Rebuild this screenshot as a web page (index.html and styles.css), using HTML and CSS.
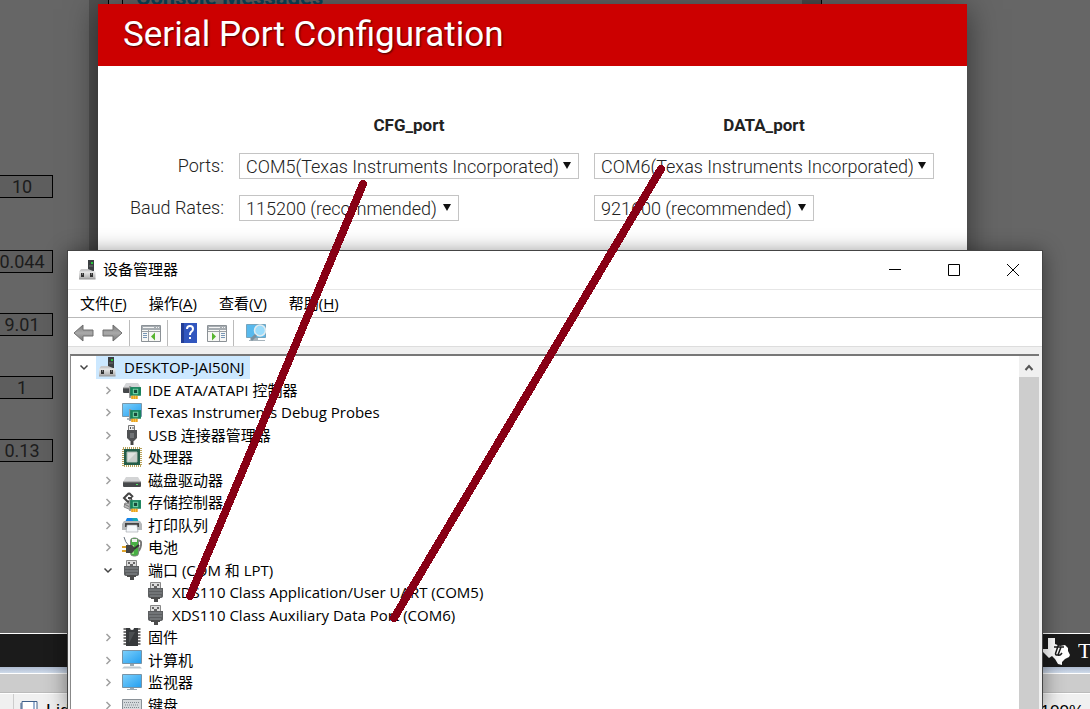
FILE: index.html
```html
<!DOCTYPE html>
<html lang="zh-CN">
<head>
    <meta charset="UTF-8">
    <meta name="viewport" content="width=device-width, initial-scale=1.0">
    <title>Serial Port Configuration</title>
    <link rel="stylesheet" href="styles.css">
</head>
<body>

    <!-- icon sprites -->
    <svg width="0" height="0" class="sprites" aria-hidden="true">
        <defs>
            <linearGradient id="gray" x1="0" y1="0" x2="0" y2="1"><stop offset="0" stop-color="#eee"/><stop offset="1" stop-color="#aaa"/></linearGradient>
            <linearGradient id="blue" x1="0" y1="0" x2="1" y2="1"><stop offset="0" stop-color="#7dd0fb"/><stop offset="1" stop-color="#229ef0"/></linearGradient>
            <linearGradient id="arrow" x1="0" y1="0" x2="0" y2="1"><stop offset="0" stop-color="#777"/><stop offset=".5" stop-color="#aaa"/><stop offset="1" stop-color="#777"/></linearGradient>
        </defs>
        <symbol id="i-pc" viewBox="0 0 20 20">
            <path d="M10 0h6v11h-6z" fill="#3b3f42"/><path d="M13 2h2v2h-2z" fill="#26c53a"/><path d="M11 6h4" stroke="#777"/>
            <path d="M3 9h7l5 2 2 1v2H1v-2z" fill="#c9c9ca"/><path d="M1 11.500h16.500V19H1z" fill="url(#gray)"/><path d="M1 19h16.500" stroke="#999"/>
            <path d="M3 13h3v4H3zM12 13h3v4h-3z" fill="#333"/><path d="M4 13h1v2H4zM13 13h1v2h-1z" fill="#777"/>
        </symbol>
        <symbol id="i-card" viewBox="0 0 11 12">
            <path d="M1 0v11" stroke="#999" stroke-width="2"/><path d="M1 1h10v8H1z" fill="#17825a"/><path d="M4 3h4v4H4z" fill="#174b3c" stroke="#72d1a5"/><path d="M2 9h6v3H2z" fill="#eba11b"/><path d="M4 9v3M6 9v3" stroke="#fbd66c" stroke-width=".6"/>
        </symbol>
        <symbol id="i-ide" viewBox="0 0 20 20">
            <path d="M4 3h12l3 5H1z" fill="#d4d5d7"/><path d="M1 8h18v4q0 1-1 1H2q-1 0-1-1z" fill="#45484a"/><path d="M1 8h18" stroke="#888"/>
            <use href="#i-card" x="7" y="6" width="12" height="13"/>
        </symbol>
        <symbol id="i-probe" viewBox="0 0 20 20">
            <path d="M.5 1.500h19v13H.5z" fill="url(#blue)" stroke="#7b98aa"/><path d="M5 17h7" stroke="#a8b5bd" stroke-width="2"/>
            <use href="#i-card" x="7" y="7" width="12" height="13"/>
        </symbol>
        <symbol id="i-usb" viewBox="0 0 20 20">
            <path d="M6.500 .5h6v6h-6z" fill="#eee" stroke="#777"/><path d="M8.500 2v2M11 2v2" stroke="#555"/><path d="M5 5h10v8l-3 3H8l-3-3z" fill="#505254"/><path d="M8 8h4v5H8z" fill="#717476"/><path d="M8.500 16h3v4h-3z" fill="#444"/>
        </symbol>
        <symbol id="i-cpu" viewBox="0 0 20 20">
            <path d="M1 1h18v18H1z" fill="none" stroke="#b8a25a" stroke-width="2" stroke-dasharray="1 1"/><path d="M2 2h16v16H2z" fill="#235d49"/><path d="M5 5h10v10H5z" fill="#dfe2df" stroke="#a7b8ae"/><path d="M6 14l8-8v8z" fill="#c8cdca"/>
        </symbol>
        <symbol id="i-disk" viewBox="0 0 20 20">
            <path d="M4 7h12l3 5H1z" fill="#d3d4d5"/><path d="M1 12h18v4q0 1-1 1H2q-1 0-1-1z" fill="#47494b"/><path d="M1 12h18" stroke="#888"/><path d="M14 14h2v1h-2z" fill="#53e665"/>
        </symbol>
        <symbol id="i-storage" viewBox="0 0 20 20">
            <path d="M7 1L2 6l4 4 4-3M7 1l4 4M6 6h4" fill="none" stroke="#444" stroke-width="2"/><path d="M3 11l7 1-1 6-7-3z" fill="#bbb" stroke="#888"/><path d="M2 12l8 4" stroke="#777"/>
            <use href="#i-card" x="7" y="7" width="12" height="13"/>
        </symbol>
        <symbol id="i-printer" viewBox="0 0 20 20">
            <path d="M5 3h10l2 4H3z" fill="#1683e6"/><path d="M10 3h5l1 3h-5z" fill="#15a9b5"/><path d="M2 6h16l2 3v6H0V9z" fill="#b5b8ba"/><path d="M3 8h14v4H3z" fill="#444"/><path d="M5 10h10l1 7H4z" fill="#f5f8fb" stroke="#9aa0a5" stroke-width=".6"/>
        </symbol>
        <symbol id="i-battery" viewBox="0 0 20 20">
            <path d="M14 4q6-2 5 4t-4 7" fill="none" stroke="#777" stroke-width="2"/><rect x="8.500" y="1" width="8" height="18" rx="3" fill="#48af45" stroke="#7f8980"/><path d="M10 2h5v3h-5z" fill="#eee"/><path d="M11 8v9" stroke="#93df81" stroke-width="2"/>
            <path d="M2 0q1 5 5 9" fill="none" stroke="#68707d"/><path d="M4 8h6q5 4 0 8H4z" fill="#444"/><path d="M0 10h4M0 14h4" stroke="#e0a52d" stroke-width="2"/><path d="M12 12l5-4" stroke="#333" stroke-width="2"/>
        </symbol>
        <symbol id="i-port" viewBox="0 0 20 20">
            <path d="M4.500 .5h10v6h-10z" fill="#ddd" stroke="#888"/><path d="M6 2h2v2H6zM11 2h2v2h-2zM8 4h3v2H8z" fill="#666"/><path d="M2 6h15v8q0 2-3 2H5q-3 0-3-2z" fill="#5c5e60"/><path d="M3 8h13M3 11h13M4 14h11" stroke="#878b8e"/><path d="M5 15h9v2H5zM8 16h4v4H8z" fill="#4c4c4c"/>
        </symbol>
        <symbol id="i-chip" viewBox="0 0 20 20">
            <path d="M3 1v18M17 1v18" stroke="#777" stroke-width="3" stroke-dasharray="2 1"/><path d="M4 1h4q0 2 2 2t2-2h4v18H4z" fill="#36393b"/><path d="M7 5h6l-6 11z" fill="#4b4f51"/>
        </symbol>
        <symbol id="i-computer" viewBox="0 0 20 20">
            <path d="M.5 .5h19v13H.5z" fill="url(#blue)" stroke="#7793a6"/><path d="M8 14h4v2H8z" fill="#9aa9b2"/><path d="M2 16.500h16l2 2H0z" fill="#bcc7ce"/>
        </symbol>
        <symbol id="i-monitor" viewBox="0 0 20 20">
            <path d="M.5 2.500h19v13H.5z" fill="url(#blue)" stroke="#7793a6"/><path d="M8 16h4v1H8zM5 17h10v1H5z" fill="#9aaab5"/>
        </symbol>
        <symbol id="i-keyboard" viewBox="0 0 20 20">
            <path d="M.5 4.500h19v12H.5z" fill="#d5d9dc" stroke="#8a9197"/><path d="M2 7.500h16M3 10h14M2 12.500h16" stroke="#818990" stroke-dasharray="1 1"/><path d="M5 15h10" stroke="#aaa"/>
        </symbol>
        <symbol id="i-open" viewBox="0 0 20 20"><path d="M6.500 9.500l3.500 3.500 3.500-3.500" fill="none" stroke="#444" stroke-width="1.500"/></symbol>
        <symbol id="i-closed" viewBox="0 0 20 20"><path d="M8.500 8l3.500 3.500L8.500 15" fill="none" stroke="#a0a0a0" stroke-width="1.500"/></symbol>
    </svg>

    <div class="page">
        <main class="workspace">
            <div class="params">
                <input type="text" class="value first" aria-label="Value 1" value="10">
                <input type="text" class="value" aria-label="Value 2" value="0.044">
                <input type="text" class="value" aria-label="Value 3" value="9.01">
                <input type="text" class="value" aria-label="Value 4" value="1">
                <input type="text" class="value" aria-label="Value 5" value="0.13">
            </div>
            <div class="splitter"></div>
            <div class="console"><div class="console-inner"><h3>Console Messages</h3><div class="track"></div></div></div>
        </main>
        <footer class="brand">
            <svg width="28" height="28" viewBox="0 0 28 28" aria-hidden="true">
                <path d="M6 1h7v6l5 2 5-1 3 3v3l2 4-1 2-4 2-3 3v3l-4-1-3-5-3-3-3 2-3-3-4-4v-2h6z" fill="#fff"/>
                <path d="M16.500 7.500l-3 9q0 2 2 1.500M12 10h10M19 10l-3 8q2 1 4-2" fill="none" stroke="#1b1b1b" stroke-width="1.500"/><path d="M19.500 3l-1 4" stroke="#1b1b1b" stroke-width="3"/>
            </svg>
            <span class="brand-name">Texas Instruments</span>
        </footer>
        <div class="frame-edge"></div>
        <div class="frame-bar"></div>
        <div class="statusbar">
            <span class="status-left">
                <svg width="18" height="18" viewBox="0 0 18 18" aria-hidden="true"><path d="M1 2v16M2 .5h15V18H2z" fill="#fff" stroke="#3e5f8a"/><path d="M14 1v16" stroke="#9db4d3" stroke-width="2"/></svg>
                <span>Lid</span>
            </span>
            <span class="zoom-level">100%</span>
        </div>
    </div>

    <section class="dialog">
        <h1>Serial Port Configuration</h1>
        <form class="ports">
            <span></span>
            <strong>CFG_port</strong>
            <strong>DATA_port</strong>

            <label for="cfgPort">Ports:</label>
            <span class="select"><select id="cfgPort"><option>COM5(Texas Instruments Incorporated)</option></select></span>
            <span class="select"><select id="dataPort" aria-label="DATA_port port"><option>COM6(Texas Instruments Incorporated)</option></select></span>

            <label for="cfgBaud">Baud Rates:</label>
            <span class="select baud"><select id="cfgBaud"><option>115200 (recommended)</option></select></span>
            <span class="select baud"><select id="dataBaud" aria-label="DATA_port baud rate"><option>921600 (recommended)</option></select></span>
        </form>
    </section>

    <section class="window">
        <header class="titlebar">
            <svg class="icon"><use href="#i-pc"/></svg>
            <h2>设备管理器</h2>
            <button aria-label="最小化"><svg width="14" height="14"><path d="M1 6.500h12" stroke="#000"/></svg></button>
            <button aria-label="最大化"><svg width="14" height="14"><path d="M1.500 1.500h11v11h-11z" fill="none" stroke="#000"/></svg></button>
            <button aria-label="关闭"><svg width="14" height="14"><path d="M1 1l12 12M13 1L1 13" stroke="#000"/></svg></button>
        </header>
        <nav class="menubar">
            <button>文件(<u>F</u>)</button>
            <button>操作(<u>A</u>)</button>
            <button>查看(<u>V</u>)</button>
            <button>帮助(<u>H</u>)</button>
        </nav>
        <div class="toolbar">
            <button aria-label="后退"><svg width="22" height="20" viewBox="0 0 22 20"><path d="M1 10l9-8v5h10v6H10v5z" fill="url(#arrow)" stroke="#707070"/></svg></button>
            <button aria-label="前进"><svg width="22" height="20" viewBox="0 0 22 20"><path d="M21 10l-9-8v5H2v6h10v5z" fill="url(#arrow)" stroke="#707070"/></svg></button>
            <span class="sep"></span>
            <button aria-label="显示/隐藏控制台树"><svg width="20" height="20" viewBox="0 0 20 20"><path d="M.5 2.500h19v16H.5z" fill="#f7f7f5" stroke="#8b9196"/><path d="M1 3h18v4H1z" fill="#a7adb2"/><path d="M2 4.500h11M15 4.500h1M17 4.500h1" stroke="#f4f4f4"/><path d="M7.500 7v11M1 8.500h18" stroke="#9a9fa3"/><path d="M2 10.500h4M2 12.500h4M2 14.500h4" stroke="#7796b5"/><path d="M14 9.500v8l-4-4z" fill="#58b530"/></svg></button>
            <span class="sep"></span>
            <button aria-label="帮助"><svg width="22" height="20" viewBox="0 0 22 20"><path d="M2 0h16v20H2z" fill="#3156be"/><path d="M2 0h3v20H2z" fill="#233e96"/><path d="M8 6q0-3 3-3t3 3q0 2-2 3-1 1-1 3" fill="none" stroke="#fff" stroke-width="2"/><path d="M10 14h2v2h-2z" fill="#fff"/></svg></button>
            <button aria-label="操作窗格"><svg width="20" height="20" viewBox="0 0 20 20"><path d="M.5 2.500h19v16H.5z" fill="#f7f7f5" stroke="#8b9196"/><path d="M1 3h18v4H1z" fill="#a7adb2"/><path d="M2 4.500h11M15 4.500h1M17 4.500h1" stroke="#f4f4f4"/><path d="M12.500 7v11M1 8.500h18" stroke="#9a9fa3"/><path d="M14 10.500h4M14 12.500h4M14 14.500h4" stroke="#7796b5"/><path d="M5 9.500v8l4-4z" fill="#58b530"/></svg></button>
            <span class="sep"></span>
            <button aria-label="扫描检测硬件改动"><svg width="22" height="20" viewBox="0 0 22 20"><path d="M1.500 1.500h19v13h-19z" fill="#58b9ed" stroke="#76a4bc"/><path d="M7 15h6v2h7v1H4v-1h3z" fill="#a6b3bb"/><circle cx="15" cy="7.500" r="5.500" fill="#9bdcfb" stroke="#e1ebef" stroke-width="1.500"/><path d="M11 12l-5 5" stroke="#7990a0" stroke-width="3"/></svg></button>
        </div>
        <div class="tree-frame">
            <ul class="tree">
                <li><button class="toggle" aria-label="折叠"><svg><use href="#i-open"/></svg></button><span class="node selected"><svg class="icon"><use href="#i-pc"/></svg>DESKTOP-JAI50NJ</span></li>
                <li class="child"><button class="toggle" aria-label="展开"><svg><use href="#i-closed"/></svg></button><span class="node"><svg class="icon"><use href="#i-ide"/></svg>IDE ATA/ATAPI 控制器</span></li>
                <li class="child"><button class="toggle" aria-label="展开"><svg><use href="#i-closed"/></svg></button><span class="node"><svg class="icon"><use href="#i-probe"/></svg>Texas Instruments Debug Probes</span></li>
                <li class="child"><button class="toggle" aria-label="展开"><svg><use href="#i-closed"/></svg></button><span class="node"><svg class="icon"><use href="#i-usb"/></svg>USB 连接器管理器</span></li>
                <li class="child"><button class="toggle" aria-label="展开"><svg><use href="#i-closed"/></svg></button><span class="node"><svg class="icon"><use href="#i-cpu"/></svg>处理器</span></li>
                <li class="child"><button class="toggle" aria-label="展开"><svg><use href="#i-closed"/></svg></button><span class="node"><svg class="icon"><use href="#i-disk"/></svg>磁盘驱动器</span></li>
                <li class="child"><button class="toggle" aria-label="展开"><svg><use href="#i-closed"/></svg></button><span class="node"><svg class="icon"><use href="#i-storage"/></svg>存储控制器</span></li>
                <li class="child"><button class="toggle" aria-label="展开"><svg><use href="#i-closed"/></svg></button><span class="node"><svg class="icon"><use href="#i-printer"/></svg>打印队列</span></li>
                <li class="child"><button class="toggle" aria-label="展开"><svg><use href="#i-closed"/></svg></button><span class="node"><svg class="icon"><use href="#i-battery"/></svg>电池</span></li>
                <li class="child"><button class="toggle" aria-label="折叠"><svg><use href="#i-open"/></svg></button><span class="node"><svg class="icon"><use href="#i-port"/></svg>端口 (COM 和 LPT)</span></li>
                <li class="leaf"><span class="node"><svg class="icon"><use href="#i-port"/></svg>XDS110 Class Application/User UART (COM5)</span></li>
                <li class="leaf"><span class="node"><svg class="icon"><use href="#i-port"/></svg>XDS110 Class Auxiliary Data Port (COM6)</span></li>
                <li class="child"><button class="toggle" aria-label="展开"><svg><use href="#i-closed"/></svg></button><span class="node"><svg class="icon"><use href="#i-chip"/></svg>固件</span></li>
                <li class="child"><button class="toggle" aria-label="展开"><svg><use href="#i-closed"/></svg></button><span class="node"><svg class="icon"><use href="#i-computer"/></svg>计算机</span></li>
                <li class="child"><button class="toggle" aria-label="展开"><svg><use href="#i-closed"/></svg></button><span class="node"><svg class="icon"><use href="#i-monitor"/></svg>监视器</span></li>
                <li class="child"><button class="toggle" aria-label="展开"><svg><use href="#i-closed"/></svg></button><span class="node"><svg class="icon"><use href="#i-keyboard"/></svg>键盘</span></li>
            </ul>
            <div class="scrollbar">
                <button aria-label="向上滚动"><svg width="20" height="20"><path d="M6.500 13l3.500-4 3.500 4" fill="none" stroke="#555" stroke-width="2"/></svg></button>
                <div class="thumb"></div>
            </div>
        </div>
    </section>

    <!-- lines from each select to its COM port -->
    <svg class="marks" aria-hidden="true">
        <line x1="363" y1="184" x2="190" y2="596"/>
        <line x1="661" y1="169" x2="394" y2="618"/>
    </svg>

</body>
</html>
```
FILE: styles.css
```css
* {
    box-sizing: border-box;
}
body {
    margin: 0;
    height: 100vh;
    overflow: hidden;
    position: relative;
    background-color: #666;
    font-family: Roboto, sans-serif;
}
button {
    border: 0;
    padding: 0;
    background: none;
    font: inherit;
    color: inherit;
}
svg {
    display: block;
    flex: none;
}
.sprites {
    position: absolute;
}

/* page behind the dialog */
.page {
    display: flex;
    flex-direction: column;
    height: 100vh;
}
.workspace {
    display: flex;
    flex: 1;
    min-height: 0;
}
.params {
    width: 89px;
    padding-top: 175px;
}
.value {
    display: block;
    width: 62px;
    height: 23px;
    margin: 0 0 40px -9px;
    padding: 0;
    border: 1px solid #000;
    background-color: #5e5e5e;
    color: #1c1c1c;
    font: 18px Roboto, sans-serif;
    text-align: center;
}
.value.first {
    margin-bottom: 52px;
}
.splitter {
    width: 19px;
    background-color: #505050;
}
.console {
    width: 714px;
    border: solid #000;
    border-width: 0 1px;
    padding-left: 13px;
}
.console-inner {
    display: flex;
    justify-content: space-between;
    height: 100%;
    padding-left: 13px;
    border-left: 1px solid #000;
}
.console h3 {
    margin: -14px 0 0;
    font-size: 22px;
    line-height: 24px;
    color: #0c465a;
}
.track {
    width: 19px;
    background-color: #4d4d4d;
}
.brand {
    display: flex;
    justify-content: flex-end;
    align-items: center;
    gap: 8px;
    height: 34px;
    border-top: 1px solid #fff;
    background-color: #1b1b1b;
    color: #fff;
}
.brand-name {
    width: 12px;
    overflow: hidden;
    white-space: nowrap;
    font: small-caps 22px "Liberation Serif", serif;
}
.frame-edge {
    height: 6px;
    background: linear-gradient(#aebbd0, #cfdbea);
}
.frame-bar {
    height: 20px;
    border-top: 1px solid #fff;
    border-bottom: 1px solid #bbb;
    background-color: #ccc;
}
.statusbar {
    display: flex;
    justify-content: space-between;
    height: 16px;
    overflow: hidden;
    border-top: 1px solid #fff;
    background-color: #f0f0f0;
    font: 18px "Liberation Sans", sans-serif;
}
.status-left {
    display: flex;
    gap: 8px;
    margin-left: 13px;
    padding: 7px 0 0 6px;
    border-left: 1px solid #ccc;
}
.zoom-level {
    padding: 8px 6px 0 0;
    font-size: 17px;
}

/* dialog */
.dialog {
    position: absolute;
    top: 4px;
    left: 98px;
    right: 123px;
    bottom: 40px;
    background-color: #fff;
    box-shadow: 0 5px 30px rgba(0, 0, 0, 0.5);
    color: #222;
}
.dialog h1 {
    margin: 0;
    padding: 0 25px;
    background-color: #c00;
    color: #fff;
    font-size: 35px;
    font-weight: 400;
    line-height: 62px;
    text-shadow: 1px 1px 2px #400;
}
.ports {
    display: grid;
    grid-template-columns: 126px 340px 340px;
    justify-content: start;
    align-items: center;
    gap: 16px 15px;
    padding: 47px 0 0;
    font-size: 18px;
    font-weight: 300;
    line-height: 24px;
}
.ports strong {
    font-size: 17px;
    font-weight: 700;
    text-align: center;
}
.ports label {
    text-align: right;
}
.select {
    position: relative;
}
.select.baud {
    width: 220px;
}
.select::after {
    content: "";
    position: absolute;
    top: 9px;
    right: 8px;
    border: 4px solid transparent;
    border-top: 7px solid #111;
    border-bottom: 0;
    pointer-events: none;
}
.select select {
    display: block;
    appearance: none;
    width: 100%;
    height: 26px;
    padding: 0 20px 0 6px;
    border: 1px solid #c4c4c4;
    border-radius: 0;
    background-color: #fff;
    color: #222;
    font: 300 18px Roboto, sans-serif;
}

/* device manager */
.window {
    position: absolute;
    top: 250px;
    left: 67px;
    right: 47px;
    bottom: 0;
    display: flex;
    flex-direction: column;
    overflow: hidden;
    border: 1px solid #444;
    border-bottom: 0;
    background-color: #f0f0f0;
    box-shadow: 0 2px 20px rgba(0, 0, 0, 0.45);
    color: #000;
    font-family: "Open Sans", "Noto Sans CJK SC", sans-serif;
    font-size: 15px;
}
.icon {
    width: 20px;
    height: 20px;
}
.titlebar {
    display: flex;
    align-items: center;
    height: 39px;
    padding-left: 10px;
    border-bottom: 1px solid #e6e6e6;
    background-color: #fff;
}
.titlebar h2 {
    flex: 1;
    margin: 0 0 0 5px;
    padding-bottom: 3px;
    font-size: 15px;
    font-weight: 400;
}
.titlebar button {
    display: grid;
    place-items: center;
    width: 59px;
    height: 38px;
}
.menubar {
    display: flex;
    gap: 22px;
    height: 28px;
    padding: 0 0 3px 12px;
    border-bottom: 1px solid #b9b9b9;
    background-color: #fff;
}
.menubar u {
    text-underline-offset: 2px;
}
.toolbar {
    display: flex;
    align-items: center;
    gap: 6px;
    height: 29px;
    padding: 1px 5px 0;
    border-bottom: 1px solid #ddd;
    background-color: #fff;
}
.sep {
    width: 1px;
    height: 26px;
    margin-right: 5px;
    background-color: #bbb;
}
.tree-frame {
    display: flex;
    flex: 1;
    min-height: 0;
    margin: 7px 3px 0 2px;
    border-top: 2px solid #777;
    border-left: 1px solid #888;
    background-color: #fff;
}
.tree {
    display: grid;
    grid-auto-rows: 1fr;
    flex: 1;
    height: 360px;
    margin: 0;
    padding: 0;
    list-style: none;
}
.tree li {
    display: flex;
    align-items: stretch;
    gap: 2px;
    min-height: 0;
    padding-left: 3px;
}
.tree .child {
    padding-left: 27px;
}
.tree .leaf {
    padding-left: 73px;
}
.toggle,
.toggle svg {
    width: 20px;
    height: 20px;
}
.node {
    display: flex;
    align-items: center;
    gap: 6px;
    padding: 0 5px 0 2px;
    line-height: 22px;
    white-space: nowrap;
}
.selected {
    background-color: #cce8ff;
}
.scrollbar {
    display: flex;
    flex-direction: column;
    width: 20px;
}
.scrollbar button {
    height: 21px;
    background-color: #f0f0f0;
}
.thumb {
    flex: 1;
    background-color: #cdcdcd;
}

/* hand-drawn lines over everything */
.marks {
    position: absolute;
    top: 0;
    left: 0;
    width: 100%;
    height: 100%;
    pointer-events: none;
}
.marks line {
    stroke: #880015;
    stroke-width: 8px;
    stroke-linecap: round;
    shape-rendering: crispEdges;
}
```
